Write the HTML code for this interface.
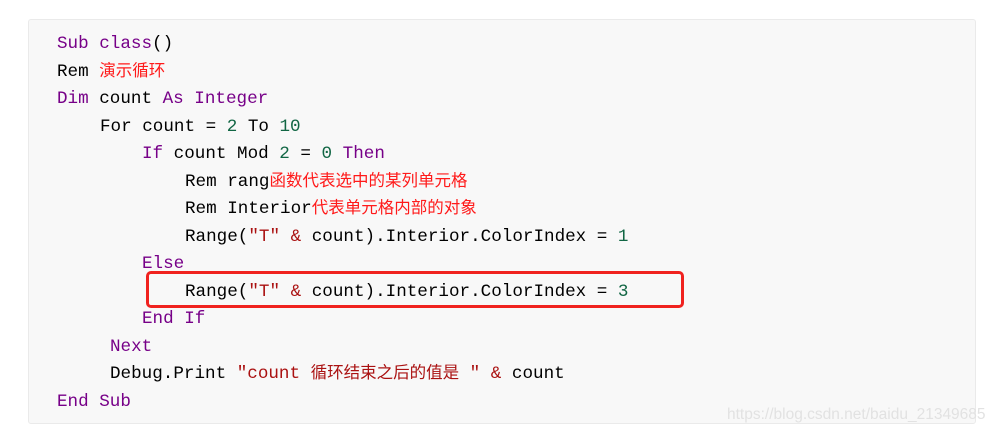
<!DOCTYPE html>
<html><head><meta charset="utf-8"><style>
html,body{margin:0;padding:0;background:#fff;width:1000px;height:436px;overflow:hidden;position:relative}
.box{position:absolute;left:28px;top:19px;width:946px;height:403px;background:#f8f8f8;border:1px solid #eaeaea;border-radius:3px}
.l{position:absolute;font-family:"Liberation Mono","Noto Sans CJK SC",monospace;font-size:17.6px;line-height:20px;white-space:pre;color:#000}
.k{color:#770088}.n{color:#116644}.s{color:#aa1111}.r{color:#ff1a1a;font-family:"Noto Sans CJK SC",sans-serif;font-size:16.5px;line-height:0}
.sc{font-family:"Noto Sans CJK SC",sans-serif;font-size:16.5px;line-height:0}
.hl{position:absolute;left:146px;top:271px;width:532px;height:31px;border:3px solid #f0221f;border-radius:5px}
.wm{position:absolute;left:727px;top:406px;font-family:"Liberation Sans",sans-serif;font-size:15.5px;color:#e2e2e2}
</style></head><body>
<div class="box"></div>
<div class="l" style="left:57px;top:34px"><span class="k">Sub</span> <span class="k">class</span>()</div>
<div class="l" style="left:57px;top:62px">Rem <span class="r">演示循环</span></div>
<div class="l" style="left:57px;top:89px"><span class="k">Dim</span> count <span class="k">As</span> <span class="k">Integer</span></div>
<div class="l" style="left:100px;top:117px">For count = <span class="n">2</span> To <span class="n">10</span></div>
<div class="l" style="left:142px;top:144px"><span class="k">If</span> count Mod <span class="n">2</span> = <span class="n">0</span> <span class="k">Then</span></div>
<div class="l" style="left:185px;top:172px">Rem rang<span class="r">函数代表选中的某列单元格</span></div>
<div class="l" style="left:185px;top:199px">Rem Interior<span class="r">代表单元格内部的对象</span></div>
<div class="l" style="left:185px;top:227px">Range(<span class="s">"T"</span> <span class="s">&amp;</span> count).Interior.ColorIndex = <span class="n">1</span></div>
<div class="l" style="left:142px;top:254px"><span class="k">Else</span></div>
<div class="l" style="left:185px;top:282px">Range(<span class="s">"T"</span> <span class="s">&amp;</span> count).Interior.ColorIndex = <span class="n">3</span></div>
<div class="l" style="left:142px;top:309px"><span class="k">End</span> <span class="k">If</span></div>
<div class="l" style="left:110px;top:337px"><span class="k">Next</span></div>
<div class="l" style="left:110px;top:364px">Debug.Print <span class="s">"count <span class="sc">循环结束之后的值是</span> "</span> <span class="s">&amp;</span> count</div>
<div class="l" style="left:57px;top:392px"><span class="k">End</span> <span class="k">Sub</span></div>
<div class="hl"></div>
<div class="wm">https://blog.csdn.net/baidu_21349685</div>
</body></html>
